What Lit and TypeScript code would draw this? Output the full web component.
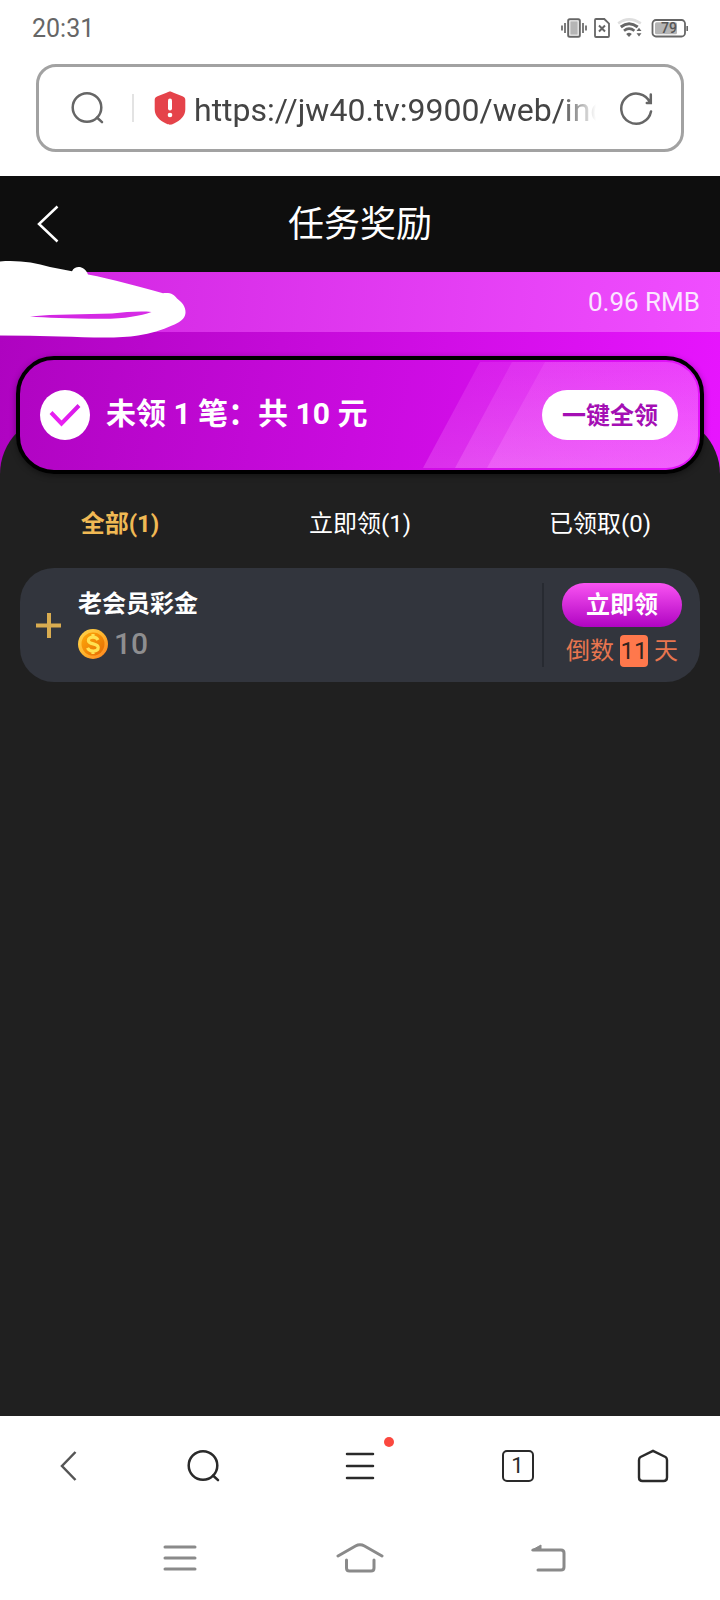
import { LitElement, html, css } from "lit";
import { customElement, state } from "lit/decorators.js";
import { classMap } from "lit/directives/class-map.js";

const searchIcon = (color: string) => html`
  <svg width="36" height="36" viewBox="0 0 36 36" fill="none" stroke=${color} stroke-width="2.5" stroke-linecap="round" aria-hidden="true">
    <circle cx="18" cy="17.5" r="14.3" />
    <path d="M28 27.5l5 4.7" />
  </svg>`;

@customElement("status-bar")
class StatusBar extends LitElement {
  static styles = css`
    :host {
      display: flex;
      align-items: center;
      justify-content: space-between;
      height: 56px;
      padding: 0 32px;
      color: #666;
      font-size: 25px;
    }
    .icons {
      display: flex;
      align-items: center;
      gap: 7px;
    }
    svg {
      display: block;
    }
    .level {
      font-size: 14px;
      font-weight: 500;
    }
  `;

  render() {
    return html`
      <span>20:31</span>
      <div class="icons">
        <svg width="26" height="20" viewBox="0 0 26 20" aria-hidden="true">
          <rect x="7.2" y="1.2" width="11.6" height="17.6" rx="1.5" fill="#fff" stroke="#666" stroke-width="2" />
          <rect x="9.3" y="3.3" width="7.4" height="13.4" fill="#b5b5b5" />
          <path d="M1 7.5v5M4 5v10M22 5v10M25 7.5v5" stroke="#666" stroke-width="1.7" />
        </svg>
        <svg width="16" height="20" viewBox="0 0 16 20" fill="none" stroke="#666" aria-hidden="true">
          <path d="M2 1h8.3L15 5.7V18a1 1 0 0 1-1 1H2a1 1 0 0 1-1-1V2a1 1 0 0 1 1-1z" stroke-width="1.8" />
          <path d="M5 7.5l6 6M11 7.5l-6 6" stroke-width="2" />
        </svg>
        <svg width="26" height="20" viewBox="0 0 26 20" fill="none" aria-hidden="true">
          <path d="M1.2 5.4Q12 -2.7 23.8 5.4" stroke="#dedede" stroke-width="2.6" />
          <path d="M3.8 9Q12 2.6 20.7 9" stroke="#666" stroke-width="3" />
          <path d="M7 12.8Q12 8.6 17.4 12.8" stroke="#666" stroke-width="2.6" />
          <path d="M9.2 16Q12 13.4 14.8 16L12 19z" fill="#666" />
          <path d="M19.5 13l2.5-3.2 2.5 3.2zM19.5 15.2h5l-2.500 3.2z" fill="#666" />
        </svg>
        <svg width="38" height="20" viewBox="0 0 38 20" aria-hidden="true">
          <rect x="2.5" y="2" width="32.5" height="16.5" rx="3.5" fill="#fff" stroke="#666" stroke-width="1.8" />
          <rect x="5" y="4.3" width="22" height="12" rx="1.5" fill="#b5b5b5" />
          <path d="M37.200 8v5" stroke="#666" stroke-width="1.6" />
          <text class="level" x="19" y="15.2" text-anchor="middle" fill="#555">79</text>
        </svg>
      </div>
    `;
  }
}

@customElement("address-bar")
class AddressBar extends LitElement {
  static styles = css`
    :host {
      display: block;
      padding: 8px 36px 24px;
    }
    .bar {
      display: flex;
      align-items: center;
      box-sizing: border-box;
      height: 88px;
      padding: 0 27px 0 30px;
      border: 3px solid #a2a2a2;
      border-radius: 20px;
      background: #fff;
    }
    .icon {
      display: block;
      padding: 0;
      border: 0;
      background: none;
    }
    svg {
      display: block;
    }
    .rule {
      width: 2px;
      height: 28px;
      margin: 0 20px 0 27px;
      background: #e3e3e3;
    }
    .url {
      flex: 1;
      min-width: 0;
      margin: 0 22px 0 8px;
      padding: 4px 0 0;
      border: 0;
      outline: 0;
      background: none;
      color: #444;
      font: 32px/40px Roboto, "Noto Sans", sans-serif;
      mask-image: linear-gradient(to right, #000 calc(100% - 36px), transparent);
    }
  `;

  render() {
    return html`
      <form class="bar" @submit=${(e: Event) => e.preventDefault()}>
        <button class="icon" aria-label="搜索">${searchIcon("#666")}</button>
        <span class="rule"></span>
        <svg width="32" height="34" viewBox="0 0 32 34" aria-hidden="true">
          <path d="M16 .5c1.3 0 2 .6 3.5 1.3L28.5 5.2C30.5 6 31.3 7 31.3 9v9.5c0 6.5-5 11-11.3 14-1.7.8-2.6 1.2-4 1.2s-2.3-.4-4-1.2C5.700 29.5.7 25 .7 18.5V9c0-2 .8-3 2.8-3.8l9-3.4C14 1.1 14.700.5 16 .5z" fill="#e5434a" />
          <path d="M16 9.500v8" stroke="#fff" stroke-width="4" stroke-linecap="round" />
          <circle cx="16" cy="24" r="2.300" fill="#fff" />
        </svg>
        <input class="url" type="text" aria-label="网址" .value=${"https://jw40.tv:9900/web/index"} />
        <button class="icon" type="button" aria-label="刷新">
          <svg width="36" height="36" viewBox="0 0 36 36" fill="none" stroke="#666" stroke-width="2.500" stroke-linecap="round" aria-hidden="true">
            <path d="M33 21.500A15 15 0 1 1 32 12.600M32.800 4.500v8.500h-4" />
          </svg>
        </button>
      </form>
    `;
  }
}

@customElement("task-item")
class TaskItem extends LitElement {
  static styles = css`
    :host {
      display: flex;
      align-items: center;
      box-sizing: border-box;
      height: 114px;
      margin: 0 20px;
      padding: 0 18px 0 16px;
      border-radius: 34px;
      background: #32353d;
    }
    svg {
      display: block;
    }
    .add,
    .claim {
      padding: 0;
      border: 0;
      background: none;
      font: inherit;
    }
    .info {
      flex: 1;
      padding: 0 0 2px 17px;
    }
    .name {
      margin: 0;
      color: #fff;
      font-size: 24px;
      font-weight: 700;
      line-height: 36px;
    }
    .amount {
      display: flex;
      align-items: center;
      gap: 6px;
      padding-top: 4px;
      color: #8e8e90;
      font-size: 30px;
      font-weight: 500;
      line-height: 36px;
    }
    .side {
      display: flex;
      flex-direction: column;
      align-items: center;
      gap: 8px;
      height: 84px;
      padding-left: 18px;
      border-left: 2px solid #272a31;
    }
    .claim {
      width: 120px;
      height: 44px;
      border-radius: 22px;
      background: linear-gradient(#f953f2, #b004c2);
      color: #fff;
      font-size: 24px;
      font-weight: 700;
      line-height: 42px;
    }
    .countdown {
      display: flex;
      align-items: center;
      gap: 6px;
      color: #e8754f;
      font-size: 24px;
      line-height: 32px;
    }
    .days {
      width: 28px;
      height: 32px;
      border-radius: 4px;
      background: #ff784c;
      color: #32241f;
      text-align: center;
    }
  `;

  render() {
    return html`
      <button class="add" aria-label="展开">
        <svg width="25" height="26" viewBox="0 0 25 26" stroke="#d9ac50" stroke-width="4" aria-hidden="true">
          <path d="M0 13.500h25M13 1v25" />
        </svg>
      </button>
      <div class="info">
        <h2 class="name">老会员彩金</h2>
        <div class="amount">
          <svg width="30" height="30" viewBox="0 0 30 30" aria-hidden="true">
            <defs>
              <linearGradient id="rim" x1="0" y1="0" x2="1" y2="1">
                <stop offset="0" stop-color="#ffd84f" />
                <stop offset=".5" stop-color="#ffb52e" />
                <stop offset="1" stop-color="#ff7e1b" />
              </linearGradient>
              <linearGradient id="face" x1="0" y1="0" x2="1" y2="1">
                <stop offset="0" stop-color="#ffab0a" />
                <stop offset="1" stop-color="#e56a04" />
              </linearGradient>
            </defs>
            <circle cx="15" cy="15" r="15" fill="url(#rim)" />
            <circle cx="15" cy="15" r="11.500" fill="url(#face)" />
            <path d="M20 11c-1-2.200-2.900-2.900-5-2.900-2.700 0-4.600 1.200-4.600 3.300 0 4.600 9.800 2.400 9.800 7.200 0 2.300-2.100 3.500-5 3.500-2.500 0-4.700-.9-5.700-3.200M15 5V8M15 22v3" fill="none" stroke="#ffe152" stroke-width="3.200" />
          </svg>
          <span>10</span>
        </div>
      </div>
      <div class="side">
        <button class="claim">立即领</button>
        <div class="countdown"><span>倒数</span><span class="days">11</span><span>天</span></div>
      </div>
    `;
  }
}

@customElement("reward-page")
class RewardPage extends LitElement {
  @state() private active = 0;

  private tabs = ["全部(1)", "立即领(1)", "已领取(0)"];

  static styles = css`
    :host {
      display: flex;
      flex-direction: column;
      flex: 1;
      background: #202020;
    }
    button {
      padding: 0;
      border: 0;
      background: none;
      font: inherit;
    }
    svg {
      display: block;
    }
    .header {
      display: grid;
      grid-template-columns: 96px 1fr 96px;
      align-items: center;
      height: 96px;
      background: #0e0e0e;
      color: #fff;
    }
    .back {
      justify-self: center;
    }
    .title {
      margin: 0;
      padding-top: 2px;
      font-size: 36px;
      font-weight: 400;
      line-height: 48px;
      text-align: center;
    }
    .hero {
      position: relative;
      background: linear-gradient(100deg, #ad03bf, #e815ff);
    }
    .balance {
      display: flex;
      align-items: center;
      justify-content: flex-end;
      height: 60px;
      padding: 0 20px;
      background: linear-gradient(95deg, #d023e0, #f04eff);
      color: #fbe6ff;
      font-size: 26px;
    }
    .scribble {
      position: absolute;
      left: 0;
      top: -12px;
    }
    .stage {
      display: grid;
      padding-top: 24px;
    }
    .sheet {
      grid-area: 1 / 1;
      margin-top: 59px;
      border-radius: 60px 60px 0 0;
      background: #202020;
    }
    .summary {
      grid-area: 1 / 1;
      z-index: 1;
      display: grid;
      height: 110px;
      margin: 0 16px;
      overflow: hidden;
      border: 4px solid #000;
      border-radius: 38px;
      background: linear-gradient(100deg, #b004c2, #e312fb);
      box-shadow: 0 2px 6px rgba(0, 0, 0, 0.4);
    }
    .stripes {
      grid-area: 1 / 1;
      justify-self: end;
      align-self: center;
      margin-right: 2px;
    }
    .line {
      grid-area: 1 / 1;
      display: flex;
      align-items: center;
      padding: 0 22px 0 20px;
      color: #fff;
    }
    .text {
      flex: 1;
      margin: 0;
      padding: 0 0 2px 16px;
      font-size: 30px;
      font-weight: 700;
      line-height: 40px;
    }
    .all {
      width: 136px;
      height: 50px;
      padding-bottom: 4px;
      border-radius: 25px;
      background: #fff;
      color: #a40fb4;
      font-size: 24px;
      font-weight: 700;
    }
    .tabs {
      display: grid;
      grid-template-columns: repeat(3, 1fr);
      padding: 32px 0 26px;
    }
    .tab {
      color: #fff;
      font-size: 24px;
      line-height: 36px;
    }
    .tab.on {
      color: #f0b954;
      font-weight: 700;
    }
  `;

  render() {
    return html`
      <header class="header">
        <button class="back" aria-label="返回">
          <svg width="22" height="38" viewBox="0 0 22 38" fill="none" stroke="#fff" stroke-width="2.500" aria-hidden="true">
            <path d="M20.500 1.500L2 19l18.500 17.500" />
          </svg>
        </button>
        <h1 class="title">任务奖励</h1>
      </header>
      <section class="hero">
        <div class="balance">0.96 RMB</div>
        <svg class="scribble" width="190" height="80" viewBox="0 0 190 80" aria-hidden="true">
          <path
            fill="#fff"
            fill-rule="evenodd"
            d="M0 1.500C18 0 34 2.500 50 7L72 11.200C75 5.500 84 5 88 14.500C112 19 140 27 163 33.200C171 32.500 174 34.500 177 38.500C182 42 186 47 185.500 53C185 59 179 63 172 65.500C162 70 151 73.500 138 75.500C120 78.500 92 77.500 60 76.500Q30 75.500 0 75.500zM30 56.500C45 57.500 70 58.800 100 58.800C125 59 140 56 151.500 52C140 51 126 52 112 53.500C84 54.500 55 54 30 56.500z"
          />
        </svg>
        <div class="stage">
          <div class="sheet"></div>
          <div class="summary">
            <svg class="stripes" width="276" height="106" viewBox="0 0 276 106" aria-hidden="true">
              <defs>
                <linearGradient id="shine" x1="0" y1="0" x2="0" y2="1">
                  <stop offset="0" stop-color="#ff90ff" stop-opacity=".14" />
                  <stop offset="1" stop-color="#ffa0ff" stop-opacity=".24" />
                </linearGradient>
                <clipPath id="edge"><path d="M0 0h244a32 32 0 0 1 32 32v42a32 32 0 0 1-32 32H0z" /></clipPath>
              </defs>
              <g fill="url(#shine)" clip-path="url(#edge)">
                <path d="M58 0H276V106H1z" />
                <path d="M90 0H276V106H33z" />
                <path d="M123 0H276V106H65z" />
              </g>
            </svg>
            <div class="line">
              <svg width="50" height="50" viewBox="0 0 50 50" aria-hidden="true">
                <defs>
                  <linearGradient id="tick" x1="0" y1="1" x2="1" y2="0">
                    <stop offset="0" stop-color="#ee22f4" />
                    <stop offset="1" stop-color="#d41ae8" />
                  </linearGradient>
                </defs>
                <circle cx="25" cy="25" r="25" fill="#fff" />
                <path d="M11 22.500l10.500 11L39 15.500" fill="none" stroke="url(#tick)" stroke-width="4" />
              </svg>
              <p class="text">未领 1 笔：共 10 元</p>
              <button class="all">一键全领</button>
            </div>
          </div>
        </div>
      </section>
      <div class="tabs" role="tablist">
        ${this.tabs.map(
          (label, i) => html`<button
            class=${classMap({ tab: true, on: this.active === i })}
            role="tab"
            aria-selected=${this.active === i}
            @click=${() => (this.active = i)}
          >${label}</button>`
        )}
      </div>
      <task-item></task-item>
    `;
  }
}

@customElement("browser-nav")
class BrowserNav extends LitElement {
  static styles = css`
    :host {
      display: block;
      background: #fff;
    }
    .tools,
    .system {
      display: grid;
      align-items: center;
      justify-items: center;
    }
    .tools {
      grid-template-columns: 3fr 3fr 4fr 3fr 3fr;
      height: 100px;
    }
    .system {
      grid-template-columns: repeat(3, 1fr);
      height: 84px;
      padding: 0 90px;
    }
    button {
      position: relative;
      padding: 0;
      border: 0;
      background: none;
      color: #2a2a2a;
    }
    svg {
      display: block;
    }
    .dot {
      position: absolute;
      top: -15px;
      right: -19px;
      width: 10px;
      height: 10px;
      border-radius: 50%;
      background: #fb483f;
    }
    .count {
      box-sizing: border-box;
      width: 32px;
      height: 32px;
      border: 2px solid #2a2a2a;
      border-radius: 5px;
      font: 22px/28px Roboto, sans-serif;
    }
  `;

  render() {
    return html`
      <nav class="tools">
        <button aria-label="后退">
          <svg width="18" height="32" viewBox="0 0 18 32" fill="none" stroke="#555" stroke-width="2.500" aria-hidden="true">
            <path d="M16.500 2L3 16l13.500 14" />
          </svg>
        </button>
        <button aria-label="搜索">${searchIcon("#2a2a2a")}</button>
        <button aria-label="菜单">
          <svg width="30" height="28" viewBox="0 0 30 28" stroke="#2a2a2a" stroke-width="2.500" stroke-linecap="round" aria-hidden="true">
            <path d="M2 2h26M2 14h26M2 26h26" />
          </svg>
          <span class="dot"></span>
        </button>
        <button class="count" aria-label="标签页 1">1</button>
        <button aria-label="主页">
          <svg width="32" height="34" viewBox="0 0 32 34" fill="none" stroke="#2a2a2a" stroke-width="2.400" stroke-linejoin="round" aria-hidden="true">
            <path d="M16 1.800L28.500 8Q30 9 30 11V28.500Q30 32 26.500 32H5.500Q2 32 2 28.500V11Q2 9 3.500 8z" />
          </svg>
        </button>
      </nav>
      <nav class="system">
        <button aria-label="最近任务">
          <svg width="34" height="26" viewBox="0 0 34 26" stroke="#8a8a8a" stroke-width="3" stroke-linecap="round" aria-hidden="true">
            <path d="M2 2h30M2 13h30M2 24h30" />
          </svg>
        </button>
        <button aria-label="桌面">
          <svg width="48" height="32" viewBox="0 0 48 32" fill="none" stroke="#8a8a8a" stroke-width="3" stroke-linecap="round" aria-hidden="true">
            <path d="M2 14L19.500 4Q24 1.500 28.500 4L46 14M10.500 18V26Q10.500 29 13.500 29H35Q38 29 38 26V18" />
          </svg>
        </button>
        <button aria-label="返回">
          <svg width="52" height="28" viewBox="0 0 52 28" fill="none" stroke="#8a8a8a" stroke-width="3" stroke-linecap="round" aria-hidden="true">
            <path d="M19 6H47Q50 6 50 9V23Q50 26 47 26H24" />
            <path d="M18 6L27 1V6z" fill="#8a8a8a" stroke-width="1" stroke-linejoin="round" />
          </svg>
        </button>
      </nav>
    `;
  }
}

@customElement("app-root")
class AppRoot extends LitElement {
  static styles = css`
    :host {
      display: flex;
      flex-direction: column;
      min-height: 100vh;
      background: #fff;
      font-family: Roboto, "Noto Sans CJK SC", sans-serif;
    }
  `;

  render() {
    return html`
      <status-bar></status-bar>
      <address-bar></address-bar>
      <reward-page></reward-page>
      <browser-nav></browser-nav>
    `;
  }
}
